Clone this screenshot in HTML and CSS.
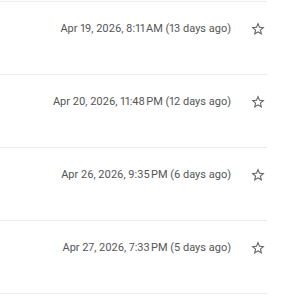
FILE: index.html
```html
<!DOCTYPE html>
<html>
<head>
<meta charset="utf-8">
<link rel="stylesheet" href="styles.css">
</head>
<body>
<div class="list">
  <div class="row">
    <span class="date">Apr 19, 2026, 8:11&#8239;AM (13 days ago)</span>
    <span class="star"><svg viewBox="0 0 24 24" width="16" height="16"><path d="M22 9.24l-7.19-.62L12 2 9.19 8.63 2 9.24l5.46 4.730L5.82 21 12 17.27 18.18 21l-1.63-7.03L22 9.24zM12 15.4l-3.76 2.27 1-4.28-3.32-2.88 4.38-.38L12 6.1l1.71 4.04 4.38.38-3.32 2.88 1 4.28L12 15.4z"/></svg></span>
  </div>
  <div class="row">
    <span class="date">Apr 20, 2026, 11:48&#8239;PM (12 days ago)</span>
    <span class="star"><svg viewBox="0 0 24 24" width="16" height="16"><path d="M22 9.24l-7.19-.62L12 2 9.19 8.63 2 9.24l5.46 4.73L5.82 21 12 17.27 18.18 21l-1.63-7.03L22 9.24zM12 15.4l-3.76 2.27 1-4.28-3.32-2.88 4.38-.38L12 6.1l1.71 4.04 4.38.38-3.32 2.88 1 4.28L12 15.4z"/></svg></span>
  </div>
  <div class="row">
    <span class="date">Apr 26, 2026, 9:35&#8239;PM (6 days ago)</span>
    <span class="star"><svg viewBox="0 0 24 24" width="16" height="16"><path d="M22 9.24l-7.19-.62L12 2 9.19 8.63 2 9.24l5.46 4.73L5.82 21 12 17.27 18.18 21l-1.63-7.03L22 9.24zM12 15.4l-3.76 2.27 1-4.28-3.32-2.88 4.38-.38L12 6.1l1.71 4.04 4.38.38-3.32 2.88 1 4.28L12 15.4z"/></svg></span>
  </div>
  <div class="row">
    <span class="date">Apr 27, 2026, 7:33&#8239;PM (5 days ago)</span>
    <span class="star"><svg viewBox="0 0 24 24" width="16" height="16"><path d="M22 9.24l-7.19-.62L12 2 9.19 8.63 2 9.24l5.46 4.73L5.82 21 12 17.27 18.18 21l-1.63-7.03L22 9.24zM12 15.4l-3.76 2.27 1-4.28-3.32-2.88 4.38-.38L12 6.1l1.71 4.04 4.38.38-3.32 2.88 1 4.28L12 15.4z"/></svg></span>
  </div>
</div>
</body>
</html>
```
FILE: styles.css
```css
html, body {
  margin: 0;
  padding: 0;
  background: #fff;
}
body {
  font-family: Roboto, "Liberation Sans", sans-serif;
}
.list {
  width: 267px;
  padding-top: 1px;
}
.row {
  height: 72px;
  border-top: 1px solid #ececec;
  display: flex;
  justify-content: flex-end;
  align-items: flex-start;
}
.row:last-child {
  border-bottom: 1px solid #ececec;
}
.date {
  font-size: 11px;
  line-height: 16px;
  color: #555;
  font-variant-numeric: proportional-nums;
  margin-top: 19px;
}
.star {
  width: 16px;
  height: 16px;
  margin-top: 19px;
  margin-left: 19px;
  margin-right: 1px;
}
.star svg {
  display: block;
  fill: #5f6368;
}
```
